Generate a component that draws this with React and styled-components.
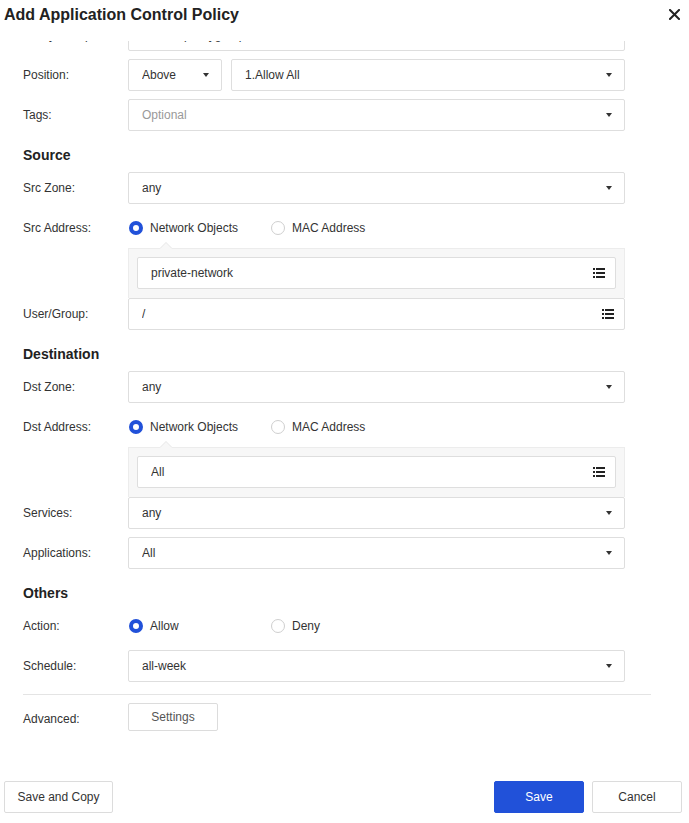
import React, { useLayoutEffect, useRef } from 'react';
import styled, { createGlobalStyle } from 'styled-components';

const GlobalStyle = createGlobalStyle`
  html, body {
    margin: 0;
    padding: 0;
    background: #fff;
  }
  body {
    font-family: "Liberation Sans", Arial, sans-serif;
    font-size: 12px;
    color: #333;
  }
  * {
    box-sizing: border-box;
  }
`;

const Dialog = styled.div`
  width: 689px;
  height: 823px;
  display: flex;
  flex-direction: column;
  background: #fff;
  overflow: hidden;
`;

const Header = styled.div`
  height: 41px;
  flex: none;
  display: flex;
  align-items: flex-start;
  justify-content: space-between;
  padding: 5px 8px 0 4px;
  background: #fff;
`;

const Title = styled.h1`
  margin: 0;
  font-size: 16px;
  font-weight: 700;
  line-height: 19px;
  color: #222;
`;

const CloseButton = styled.button`
  border: 0;
  background: none;
  padding: 0;
  width: 14px;
  height: 14px;
  margin-top: 2px;
  display: flex;
  align-items: center;
  justify-content: center;
  cursor: pointer;
`;

const Body = styled.div`
  flex: 1;
  overflow: hidden;
  padding: 12px 38px 40px 23px;
  display: flex;
  flex-direction: column;
  gap: 8px;
`;

const SectionTitle = styled.h2`
  margin: 8px 0 0;
  height: 17px;
  font-size: 14px;
  font-weight: 700;
  line-height: 17px;
  color: #222;
`;

const Row = styled.div`
  display: flex;
  align-items: ${p => (p.$top ? 'flex-start' : 'center')};
  min-height: 32px;
`;

const Label = styled.div`
  width: 105px;
  flex: none;
  line-height: ${p => (p.$tall ? '32px' : 'normal')};
  color: #333;
`;

const Controls = styled.div`
  width: 497px;
  display: flex;
  gap: 9px;
`;

const Box = styled.div`
  position: relative;
  height: 32px;
  flex: ${p => (p.$width ? 'none' : 1)};
  width: ${p => (p.$width ? `${p.$width}px` : 'auto')};
  display: flex;
  align-items: center;
  padding: 0 10px 0 13px;
  border: 1px solid #dedede;
  border-radius: 2px;
  background: #fff;
  color: ${p => (p.$placeholder ? '#999' : '#333')};
`;

const BoxText = styled.span`
  flex: 1;
  white-space: nowrap;
  overflow: hidden;
`;

const Caret = styled.span`
  width: 0;
  height: 0;
  margin-right: 2px;
  border-left: 3px solid transparent;
  border-right: 3px solid transparent;
  border-top: 4px solid #333;
`;

const RadioGroup = styled.div`
  display: flex;
  align-items: center;
`;

const RadioOption = styled.label`
  width: 142px;
  display: flex;
  align-items: center;
  gap: 7px;
  padding-left: 1px;
  color: #333;
  cursor: pointer;
`;

const RadioDot = styled.span`
  width: 14px;
  height: 14px;
  border-radius: 50%;
  flex: none;
  background: #fff;
  border: ${p => (p.$checked ? '4px solid #2151d9' : '1px solid #cfcfcf')};
`;

const AddressBlock = styled.div`
  display: flex;
  flex-direction: column;
`;

const Panel = styled.div`
  position: relative;
  margin: 4px 0 0 105px;
  width: 497px;
  padding: 8px 8px 9px;
  background: #f7f7f7;
  border: 1px solid #ececec;
  border-bottom: 0;

  &::before,
  &::after {
    content: '';
    position: absolute;
    left: 31px;
    width: 0;
    height: 0;
    border-left: 6px solid transparent;
    border-right: 6px solid transparent;
  }
  &::before {
    top: -7px;
    border-bottom: 6px solid #e6e6e6;
  }
  &::after {
    top: -6px;
    border-bottom: 6px solid #f7f7f7;
  }
`;

const Divider = styled.hr`
  margin: 4px 0 0;
  border: 0;
  border-top: 1px solid #e4e4e4;
  width: 628px;
`;

const GhostButton = styled.button`
  height: ${p => p.$h || 32}px;
  width: ${p => p.$w}px;
  padding: 0;
  border: 1px solid #dcdcdc;
  border-radius: 2px;
  background: #fff;
  font-family: inherit;
  font-size: 12px;
  color: ${p => p.$color || '#333'};
  cursor: pointer;
`;

const PrimaryButton = styled(GhostButton)`
  border-color: #2151d9;
  background: #2151d9;
  color: #fff;
`;

const Footer = styled.div`
  height: 53px;
  flex: none;
  display: flex;
  align-items: flex-start;
  padding: 11px 7px 0 4px;
  gap: 8px;
`;

const Spacer = styled.div`
  flex: 1;
`;

const ListIcon = () => (
  <svg width="12" height="10" viewBox="0 0 12 10" aria-hidden="true">
    <g fill="#222">
      <rect x="0" y="0" width="2" height="2" />
      <rect x="3" y="0" width="9" height="2" />
      <rect x="0" y="4" width="2" height="2" />
      <rect x="3" y="4" width="9" height="2" />
      <rect x="0" y="8" width="2" height="2" />
      <rect x="3" y="8" width="9" height="2" />
    </g>
  </svg>
);

const CloseIcon = () => (
  <svg width="11" height="11" viewBox="0 0 11 11" aria-hidden="true">
    <path d="M1 1L10 10M10 1L1 10" stroke="#222" strokeWidth="2" strokeLinecap="square" />
  </svg>
);

const Select = ({ value, placeholder, width }) => (
  <Box $width={width} $placeholder={!value}>
    <BoxText>{value || placeholder}</BoxText>
    <Caret />
  </Box>
);

const Picker = ({ value }) => (
  <Box>
    <BoxText>{value}</BoxText>
    <ListIcon />
  </Box>
);

const TextBox = ({ value }) => (
  <Box>
    <BoxText>{value}</BoxText>
  </Box>
);

const Field = ({ label, children }) => (
  <Row>
    <Label>{label}</Label>
    <Controls>{children}</Controls>
  </Row>
);

const Radios = ({ label, options, checked }) => (
  <Row>
    <Label>{label}</Label>
    <RadioGroup>
      {options.map(o => (
        <RadioOption key={o}>
          <RadioDot $checked={o === checked} />
          {o}
        </RadioOption>
      ))}
    </RadioGroup>
  </Row>
);

const Address = ({ label, value, next }) => (
  <AddressBlock>
    <Radios label={label} options={['Network Objects', 'MAC Address']} checked="Network Objects" />
    <Panel>
      <Picker value={value} />
    </Panel>
    {next}
  </AddressBlock>
);

export default function App() {
  const bodyRef = useRef(null);

  // the dialog body is shown scrolled a little, as in the screenshot
  useLayoutEffect(() => {
    if (bodyRef.current) bodyRef.current.scrollTop = 74;
  }, []);

  return (
    <>
      <GlobalStyle />
      <Dialog>
        <Header>
          <Title>Add Application Control Policy</Title>
          <CloseButton aria-label="Close">
            <CloseIcon />
          </CloseButton>
        </Header>

        <Body ref={bodyRef}>
          <Field label="Name:">
            <TextBox value="Allow-Office-Apps" />
          </Field>
          <Field label="Policy Group:">
            <TextBox value="Default-policygroup" />
          </Field>
          <Field label="Position:">
            <Select value="Above" width={94} />
            <Select value="1.Allow All" />
          </Field>
          <Field label="Tags:">
            <Select placeholder="Optional" />
          </Field>

          <SectionTitle>Source</SectionTitle>
          <Field label="Src Zone:">
            <Select value="any" />
          </Field>
          <Address
            label="Src Address:"
            value="private-network"
            next={
              <Field label="User/Group:">
                <Picker value="/" />
              </Field>
            }
          />

          <SectionTitle>Destination</SectionTitle>
          <Field label="Dst Zone:">
            <Select value="any" />
          </Field>
          <Address
            label="Dst Address:"
            value="All"
            next={
              <Field label="Services:">
                <Select value="any" />
              </Field>
            }
          />
          <Field label="Applications:">
            <Select value="All" />
          </Field>

          <SectionTitle>Others</SectionTitle>
          <Radios label="Action:" options={['Allow', 'Deny']} checked="Allow" />
          <Field label="Schedule:">
            <Select value="all-week" />
          </Field>

          <Divider />
          <Row $top>
            <Label $tall>Advanced:</Label>
            <GhostButton $w={90} $h={28} $color="#555">Settings</GhostButton>
          </Row>
        </Body>

        <Footer>
          <GhostButton $w={109}>Save and Copy</GhostButton>
          <Spacer />
          <PrimaryButton $w={90}>Save</PrimaryButton>
          <GhostButton $w={90}>Cancel</GhostButton>
        </Footer>
      </Dialog>
    </>
  );
}
